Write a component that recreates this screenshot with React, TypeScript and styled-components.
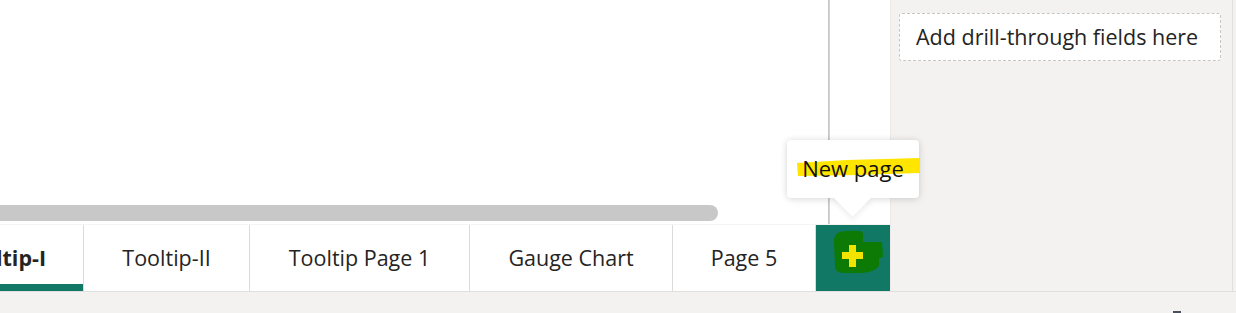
import React from "react";
import styled, { createGlobalStyle } from "styled-components";

const Global = createGlobalStyle`
  html, body { margin: 0; padding: 0; background: #f3f2f1; }
  body { font-family: "Segoe UI", "Open Sans", "Noto Sans", sans-serif; }
  * { box-sizing: border-box; }
`;

const Page = styled.div`
  position: relative;
  width: 1236px;
  height: 313px;
  overflow: hidden;
  background: #f3f2f1;
  display: flex;
  flex-direction: column;
`;

const Main = styled.div`
  display: flex;
  height: 292px;
  border-bottom: 1px solid #e1dfdd;
`;

const Workspace = styled.div`
  width: 890px;
  display: flex;
  flex-direction: column;
`;

const CanvasArea = styled.div`
  flex: 1;
  display: flex;
  background: #ffffff;
`;

const Viewport = styled.div`
  width: 828px;
  display: flex;
  flex-direction: column;
  justify-content: flex-end;
  padding-bottom: 3px;
`;

const HScrollbar = styled.div`
  width: 718px;
  height: 16px;
  background: #c8c8c8;
  border-radius: 0 8px 8px 0;
`;

const PageEdge = styled.div`
  width: 2px;
  background: linear-gradient(to right, #c3c1bf, #dcdad8);
`;

const CanvasMargin = styled.div`
  flex: 1;
`;

const TabBar = styled.div`
  height: 67px;
  display: flex;
  justify-content: flex-end;
  overflow: hidden;
  background: #ffffff;
  border-top: 1px solid #f5f4f3;
`;

const Tab = styled.div<{ $w: number; $active?: boolean }>`
  position: relative;
  flex-shrink: 0;
  width: ${(p) => p.$w}px;
  display: flex;
  align-items: center;
  justify-content: center;
  font-size: 21.5px;
  color: #252423;
  font-weight: ${(p) => (p.$active ? 700 : 400)};
  border-right: 1px solid #dddbd9;
  padding-bottom: 2px;
  white-space: nowrap;
  &::after {
    content: "";
    position: absolute;
    left: 0;
    right: 0;
    bottom: 0;
    height: 7px;
    background: ${(p) => (p.$active ? "#117865" : "transparent")};
  }
`;

const AddTab = styled.div`
  width: 74px;
  flex-shrink: 0;
  background: #117865;
`;

const RightPanel = styled.div`
  width: 343px;
  background: #f3f2f1;
  border-left: 1px solid #ebe9e7;
  border-right: 1px solid #e1dfdd;
  padding: 13px 0 0 8px;
`;

const DropZone = styled.div`
  width: 322px;
  height: 48px;
  background: #ffffff;
  border: 1px dashed #c8c6c4;
  border-radius: 3px;
  display: flex;
  align-items: center;
  padding: 0 0 2px 16px;
  font-size: 21.5px;
  color: #252423;
  white-space: nowrap;
`;

const StatusBar = styled.div`
  flex: 1;
  position: relative;
`;

const StatusIcon = styled.div`
  position: absolute;
  left: 1173px;
  top: 19px;
  width: 8px;
  height: 4px;
  background: #4a4f5c;
`;

const Tooltip = styled.div`
  position: absolute;
  left: 787px;
  top: 140px;
  width: 132px;
  height: 58px;
  background: #ffffff;
  border-radius: 4px;
  box-shadow: 0 0 6px rgba(0, 0, 0, 0.1), 0 2px 8px rgba(0, 0, 0, 0.08);
  display: flex;
  align-items: center;
  justify-content: center;
  padding-bottom: 2px;
  &::after {
    content: "";
    position: absolute;
    left: 52px;
    top: 44px;
    width: 27px;
    height: 27px;
    background: #ffffff;
    transform: rotate(45deg);
    box-shadow: 3px 3px 5px rgba(0, 0, 0, 0.06);
  }
`;

const Highlight = styled.svg`
  position: absolute;
  left: 0;
  top: 0;
  overflow: visible;
`;

const TipText = styled.span`
  position: relative;
  z-index: 1;
  font-size: 22px;
  color: #111111;
`;

const tabs = [
  { label: "Tooltip-I", w: 164, active: true },
  { label: "Tooltip-II", w: 166 },
  { label: "Tooltip Page 1", w: 220 },
  { label: "Gauge Chart", w: 203 },
  { label: "Page 5", w: 143 },
];

function AddIcon() {
  return (
    <svg width="74" height="67" viewBox="0 0 74 67">
      <path
        d="M24 7 Q32 5 44 6 Q48 7 47 12 L47 17 L66 17 L67 32 L63 33 L63 41 Q58 48 44 48 L28 48 Q19 48 19 41 L18 16 Q18 9 24 7 Z"
        fill="#0d7a05"
      />
      <rect x="33" y="20" width="7" height="22" fill="#f2e400" />
      <rect x="26" y="27" width="21" height="7" fill="#f2e400" />
    </svg>
  );
}

export default function App() {
  return (
    <>
      <Global />
      <Page>
        <Main>
          <Workspace>
            <CanvasArea>
              <Viewport>
                <HScrollbar />
              </Viewport>
              <PageEdge />
              <CanvasMargin />
            </CanvasArea>
            <TabBar>
              {tabs.map((t) => (
                <Tab key={t.label} $w={t.w} $active={t.active}>
                  {t.label}
                </Tab>
              ))}
              <AddTab>
                <AddIcon />
              </AddTab>
            </TabBar>
          </Workspace>
          <RightPanel>
            <DropZone>Add drill-through fields here</DropZone>
          </RightPanel>
        </Main>
        <StatusBar>
          <StatusIcon />
        </StatusBar>
        <Tooltip>
          <Highlight width="132" height="58">
            <polygon points="10,23 60,20 133,18 133,33 70,35 11,36" fill="#ffe500" />
          </Highlight>
          <TipText>New page</TipText>
        </Tooltip>
      </Page>
    </>
  );
}
